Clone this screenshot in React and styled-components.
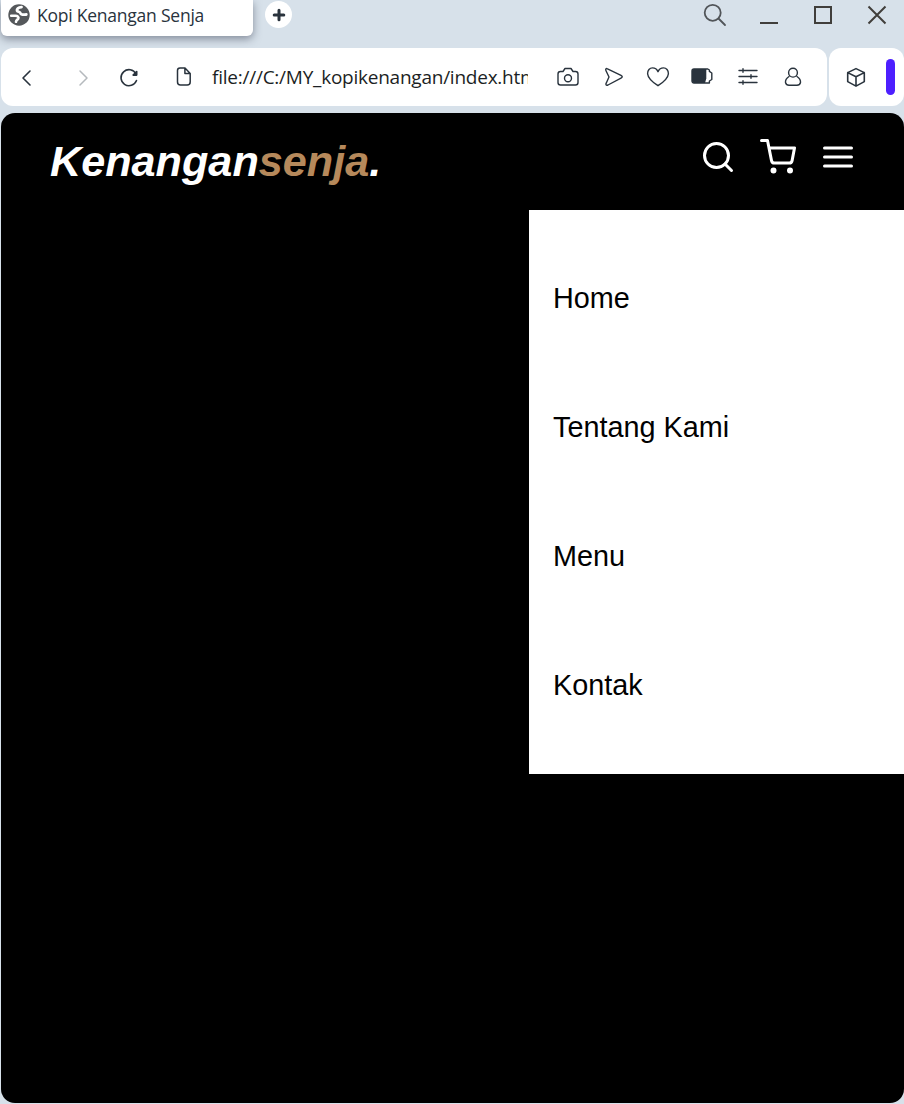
import React from "react";
import styled, { createGlobalStyle } from "styled-components";

const GlobalStyle = createGlobalStyle`
  * { box-sizing: border-box; }
  body { margin: 0; background: #d7e1ea; }
`;

const Window = styled.div`
  width: 904px;
  height: 1104px;
  display: flex;
  flex-direction: column;
  overflow: hidden;
  background: #d7e1ea;
  color: #29333d;
  font-family: "Open Sans", "Noto Sans", sans-serif;
`;

const TabStrip = styled.div`
  height: 48px;
  flex: none;
  display: flex;
  align-items: flex-start;
  padding-left: 1px;
`;

const Tab = styled.div`
  width: 252px;
  height: 36px;
  display: flex;
  align-items: flex-start;
  gap: 7px;
  padding: 4px 0 0 7px;
  border-radius: 0 0 6px 6px;
  background: #fff;
  box-shadow: 0 3px 9px rgba(50, 55, 75, 0.5);
`;

const TabTitle = styled.span`
  margin-top: -1px;
  font-size: 17.5px;
  line-height: 24px;
  letter-spacing: -0.23px;
  white-space: nowrap;
`;

const NewTab = styled.div`
  display: flex;
  align-items: center;
  justify-content: center;
  width: 27px;
  height: 27px;
  margin: 1px 0 0 12px;
  border-radius: 50%;
  background: #fff;
`;

const WindowControls = styled.div`
  display: flex;
  align-items: center;
  gap: 30px;
  height: 30px;
  margin: 0 15px 0 auto;
`;

const Toolbar = styled.div`
  display: flex;
  gap: 2px;
  height: 58px;
  flex: none;
  padding-left: 1px;
`;

const AddressBar = styled.div`
  width: 826px;
  display: flex;
  align-items: center;
  padding: 0 22px 0 13px;
  border-radius: 12px;
  background: #fff;
`;

const NavButtons = styled.div`
  display: flex;
  gap: 27px;
`;

const Address = styled.div`
  display: flex;
  align-items: center;
  gap: 17px;
  margin-left: 31px;
`;

const Url = styled.span`
  width: 316px;
  overflow: hidden;
  white-space: nowrap;
  color: #1c1f24;
  font-size: 19px;
  line-height: 30px;
  letter-spacing: -0.24px;
`;

const Actions = styled.div`
  display: flex;
  gap: 21px;
  margin-left: auto;
`;

const SidePanel = styled.div`
  width: 75px;
  display: flex;
  align-items: center;
  justify-content: space-between;
  padding: 0 9px 0 15px;
  border-radius: 12px;
  background: #fff;
`;

const Marker = styled.div`
  width: 9px;
  height: 36px;
  border-radius: 5px;
  background: #4d1fff;
`;

const Page = styled.div`
  width: 903px;
  height: 990px;
  flex: none;
  margin: 7px 0 0 1px;
  border-radius: 14px;
  overflow: hidden;
  background: #000;
  font-family: "Liberation Sans", Arial, sans-serif;
`;

const Navbar = styled.header`
  height: 97px;
  display: flex;
  justify-content: space-between;
  padding: 23px 48px 0 49px;
`;

const Logo = styled.div`
  color: #fff;
  font-size: 43.2px;
  font-style: italic;
  font-weight: 700;
  line-height: 51px;
`;

const Accent = styled.span`
  color: #b6895b;
`;

const NavIcons = styled.div`
  display: flex;
  gap: 24px;
  padding-top: 3px;
  color: #fff;
`;

const Menu = styled.nav`
  width: 375px;
  height: 564px;
  margin-left: auto;
  padding: 72px 24px 0;
  display: flex;
  flex-direction: column;
  gap: 96px;
  background: #fff;
`;

const MenuItem = styled.div`
  color: #010101;
  font-size: 28.8px;
  line-height: 33px;
`;

const Svg = styled.svg`
  display: block;
  flex: none;
  fill: none;
  stroke: currentColor;
  stroke-width: ${(p) => p.$weight || 1.4};
  stroke-linecap: round;
  stroke-linejoin: round;
  color: ${(p) => p.$color || "inherit"};
`;

const Icon = ({ size = 24, box = 24, children, ...rest }) => (
  <Svg width={size} height={size} viewBox={`0 0 ${box} ${box}`} {...rest}>{children}</Svg>
);

const Feather = ({ children }) => <Icon size={36} $weight={2}>{children}</Icon>;

const menuItems = ["Home", "Tentang Kami", "Menu", "Kontak"];

export default function App() {
  return (
    <Window>
      <GlobalStyle />
      <TabStrip>
        <Tab>
          <Icon size={22} box={22} $color="#55585b">
            <circle cx="11" cy="11" r="10.7" fill="currentColor" stroke="none" />
            <path d="M13.5 3.2C10.2 3.4 8.6 5 9 6.6C9.4 7.9 12 7.6 12.5 9.2C13 10.6 14.5 11 18.3 10.5" stroke="#fff" strokeWidth="2.8" />
            <path d="M3.2 11.8H7.5C9.5 11.9 11 13 10.3 14.6C9.6 15.8 8.2 15.8 8 17.8" stroke="#fff" strokeWidth="2.6" />
          </Icon>
          <TabTitle>Kopi Kenangan Senja</TabTitle>
        </Tab>
        <NewTab>
          <Icon size={14} box={14} $weight={3}><path d="M7 2.2v9.6M2.2 7h9.6" /></Icon>
        </NewTab>
        <WindowControls>
          <Icon $weight={1.8} $color="#515559"><circle cx="9.7" cy="9.8" r="8" /><path d="M15.5 15.5 22 22" /></Icon>
          <Icon $weight={2} $color="#403e3b"><path d="M3 20H21" strokeLinecap="butt" /></Icon>
          <Icon $weight={2} $color="#403e3b"><path d="M4 4H20V20H4Z" strokeLinejoin="miter" /></Icon>
          <Icon $weight={2} $color="#403e3b"><path d="M3.5 3.5 20.5 20.5M20.5 3.5 3.5 20.5" strokeLinecap="butt" /></Icon>
        </WindowControls>
      </TabStrip>
      <Toolbar>
        <AddressBar>
          <NavButtons>
            <Icon $weight={1.6}><path d="M16 6 9 13 16 20" /></Icon>
            <Icon $weight={1.5} $color="#b5b9bd"><path d="M15 6 22 13 15 20" /></Icon>
            <Icon $weight={1.6}><path d="M20 8.8A8 8 0 1 0 20.5 15.5" /><path d="M20.7 6.5v3.6h-3.6z" fill="currentColor" /></Icon>
          </NavButtons>
          <Address>
            <Icon $weight={1.5}><path d="M9 3H14L19.2 8.5V17a3 3 0 0 1-3 3H9.5a3 3 0 0 1-3-3V5.5A2.5 2.5 0 0 1 9 3ZM13.9 3V8.5H19.2" /></Icon>
            <Url>file:///C:/MY_kopikenangan/index.html</Url>
          </Address>
          <Actions>
            <Icon><path d="M4.5 6.5H7L9 3.5H15L17 6.5H19.5A2.5 2.5 0 0 1 22 9V17.5A2.5 2.5 0 0 1 19.5 20H4.5A2.5 2.5 0 0 1 2 17.5V9A2.5 2.5 0 0 1 4.5 6.5Z" /><circle cx="12" cy="13.3" r="3.5" /></Icon>
            <Icon><path d="M6.5 3.8 20 10.4Q22.5 11.9 20 13.2L7 20C5 20.8 4.5 19.5 5.2 18.2L8 12 5 5.8C4.3 4.3 5 3 6.5 3.8Z" /></Icon>
            <Icon><path d="M12 20.7C10 19.4 2 14.2 1.6 8.7C1.5 5.2 3.7 2.9 6.5 2.9C9.2 2.9 11 4.4 12 6.7C13 4.4 14.8 2.9 17.5 2.9C20.3 2.9 22.5 5.2 22.4 8.7C22 14.2 14 19.4 12 20.7Z" /></Icon>
            <Icon><path d="M3 4H16.8L18.4 5V6.4L20.8 8V14.5L18.4 16V18H3A2 2 0 0 1 1 16V6A2 2 0 0 1 3 4Z" /><path d="M3 4H15.3V13.5L14 18H3A2 2 0 0 1 1 16V6A2 2 0 0 1 3 4Z" fill="currentColor" stroke="none" /></Icon>
            <Icon><path d="M3 5.5H21M3 11.5H21M3 17.5H21M7 3.7v3.6M15 9.7v3.6M7 15.7v3.6" /></Icon>
            <Icon><circle cx="12" cy="7.7" r="4.4" /><path d="M8 11.5C5 13.5 4.3 15.5 4.5 17.5C5 19.3 7 20.2 8 20.2H16C17 20.2 19 19.3 19.5 17.5C19.7 15.5 19 13.5 16 11.5" /></Icon>
          </Actions>
        </AddressBar>
        <SidePanel>
          <Icon $weight={1.6}><path d="M12 3.6 20.3 7.6V16.6L12 21.1 3.7 16.6V7.6ZM3.7 7.6 12 11.8 20.3 7.6M12 11.8V21.1" /></Icon>
          <Marker />
        </SidePanel>
      </Toolbar>
      <Page>
        <Navbar>
          <Logo>Kenangan<Accent>senja</Accent>.</Logo>
          <NavIcons>
            <Feather><circle cx="11" cy="11" r="8" /><path d="M21 21 16.65 16.65" /></Feather>
            <Feather><circle cx="9" cy="21" r="1" /><circle cx="20" cy="21" r="1" /><path d="M1 1h4l2.68 13.39a2 2 0 0 0 2 1.61h9.72a2 2 0 0 0 2-1.61L23 6H6" /></Feather>
            <Feather><path d="M3 12H21M3 6H21M3 18H21" /></Feather>
          </NavIcons>
        </Navbar>
        <Menu>
          {menuItems.map((item) => <MenuItem key={item}>{item}</MenuItem>)}
        </Menu>
      </Page>
    </Window>
  );
}
